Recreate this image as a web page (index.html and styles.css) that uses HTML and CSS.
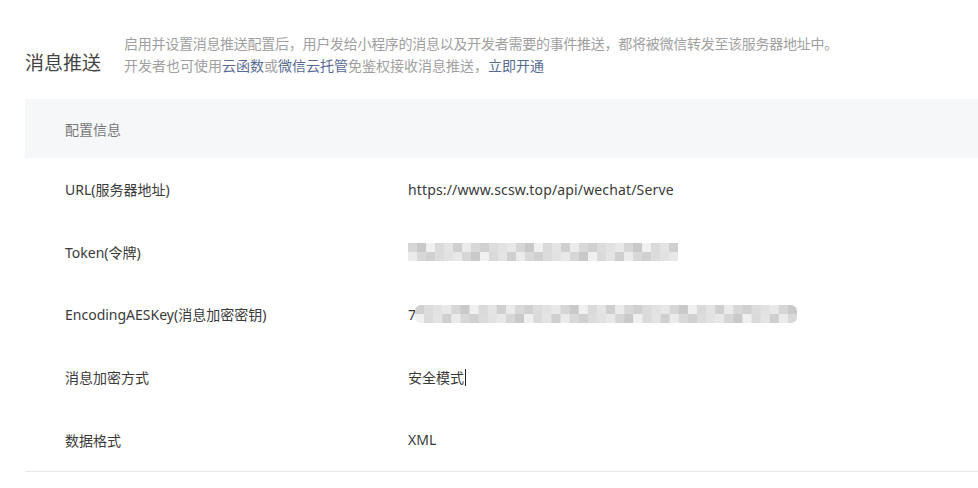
FILE: index.html
```html
<!DOCTYPE html>
<html lang="zh-CN">
<head>
<meta charset="utf-8">
<title>消息推送</title>
<link rel="stylesheet" href="styles.css">
</head>
<body>
<div class="page">
  <div class="intro">
    <h2 class="title">消息推送</h2>
    <div class="desc">
      <p class="tight">启用并设置消息推送配置后，用户发给小程序的消息以及开发者需要的事件推送，都将被微信转发至该服务器地址中。</p>
      <p>开发者也可使用<a class="link">云函数</a>或<a class="link">微信云托管</a>免鉴权接收消息推送，<a class="link">立即开通</a></p>
    </div>
  </div>
  <div class="table">
    <div class="thead">配置信息</div>
    <div class="row"><div class="label">URL(服务器地址)</div><div class="value url">https://www.scsw.top/api/wechat/Serve</div></div>
    <div class="row"><div class="label">Token(令牌)</div><div class="value"><span class="mosaic token" data-cols="30" data-seed="3"></span></div></div>
    <div class="row"><div class="label">EncodingAESKey(消息加密密钥)</div><div class="value"><span class="seven">7</span><span class="mosaic aes" data-cols="42" data-seed="11"></span></div></div>
    <div class="row"><div class="label">消息加密方式</div><div class="value">安全模式<span class="caret"></span></div></div>
    <div class="row"><div class="label">数据格式</div><div class="value">XML</div></div>
  </div>
</div>
<script src="script.js"></script>
</body>
</html>
```
FILE: styles.css
```css
* { box-sizing: border-box; }
html, body { margin: 0; padding: 0; background: #fff; }
body {
  font-family: "Noto Sans", "Noto Sans CJK SC", sans-serif;
  color: #3a3a3a;
  font-size: 14px;
}
.page { padding-left: 25px; overflow: hidden; }
.intro {
  display: flex;
  align-items: flex-end;
  padding-top: 33px;
  height: 99px;
  padding-bottom: 22px;
}
.title {
  margin: 0;
  font-size: 19px;
  font-weight: 400;
  line-height: 28px;
  color: #444;
  width: 99px;
  flex: none;
}
.desc p {
  margin: 0;
  font-size: 14px;
  line-height: 22px;
  color: #a0a0a0;
  white-space: nowrap;
}
.desc .tight { letter-spacing: -0.27px; }
.link { color: #576b95; text-decoration: none; }
.table {
  width: 1000px;
  border-bottom: 1px solid #e7e7eb;
}
.thead {
  background: #f6f7f9;
  height: 59px;
  display: flex;
  align-items: center;
  padding-left: 40px;
  color: #777;
}
.row {
  display: flex;
  align-items: center;
  height: 62.6px;
}
.label { width: 383px; padding-left: 40px; flex: none; }
.value { display: flex; align-items: center; }
.url { letter-spacing: 0.15px; }
.seven { width: 7px; }
.mosaic { display: block; height: 18px; }
.token { width: 270px; }
.aes { width: 382px; }
.mosaic svg { display: block; }
.caret {
  display: inline-block;
  width: 1px;
  height: 17px;
  background: #222;
  margin-left: 1px;
}
```
FILE: script.js
```js
(function () {
  var shades = ['#d0d0d0','#dcdcdc','#e2e2e2','#e8e8e8','#d6d6d6','#c9c9c9','#f0f0f0','#dadada','#e4e4e4','#cfcfcf','#ebebeb','#d8d8d8'];
  var ns = 'http://www.w3.org/2000/svg';
  document.querySelectorAll('.mosaic').forEach(function (el) {
    var cols = +el.dataset.cols, seed = +el.dataset.seed;
    var w = el.clientWidth, h = 18, cw = w / cols;
    var svg = document.createElementNS(ns, 'svg');
    svg.setAttribute('width', w); svg.setAttribute('height', h);
    var g = document.createElementNS(ns, 'g');
    if (el.classList.contains('aes')) {
      var defs = document.createElementNS(ns, 'defs');
      var cp = document.createElementNS(ns, 'clipPath'); cp.id = 'cp' + seed;
      var r = document.createElementNS(ns, 'rect');
      r.setAttribute('width', w); r.setAttribute('height', h); r.setAttribute('rx', 6);
      cp.appendChild(r); defs.appendChild(cp); svg.appendChild(defs);
      g.setAttribute('clip-path', 'url(#cp' + seed + ')');
    }
    var s = seed;
    for (var row = 0; row < 2; row++) {
      for (var c = 0; c < cols; c++) {
        s = (s * 9301 + 49297) % 233280;
        var rect = document.createElementNS(ns, 'rect');
        rect.setAttribute('x', (c * cw).toFixed(2));
        rect.setAttribute('y', row * 9);
        rect.setAttribute('width', (cw + 0.5).toFixed(2));
        rect.setAttribute('height', 9);
        rect.setAttribute('fill', shades[s % shades.length]);
        g.appendChild(rect);
      }
    }
    svg.appendChild(g);
    el.appendChild(svg);
  });
})();
```
